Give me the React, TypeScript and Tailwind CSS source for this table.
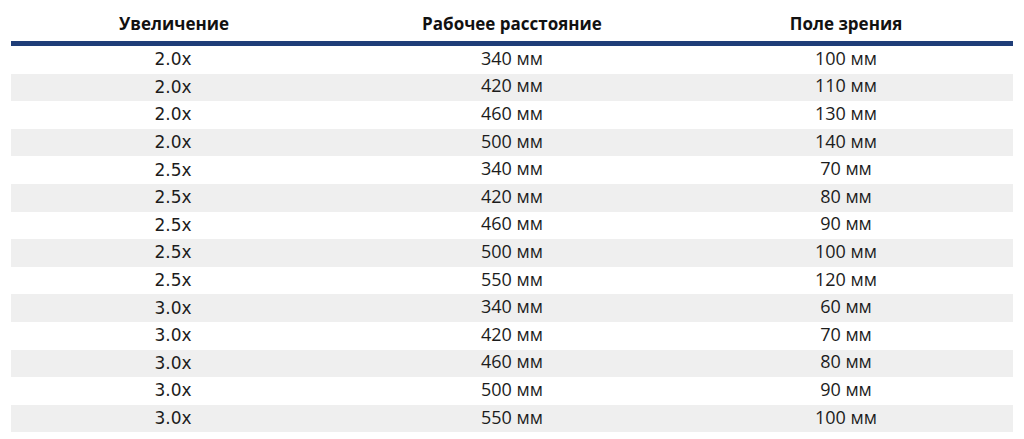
const rows: [string, string, string][] = [
  ["2.0x", "340 мм", "100 мм"],
  ["2.0x", "420 мм", "110 мм"],
  ["2.0x", "460 мм", "130 мм"],
  ["2.0x", "500 мм", "140 мм"],
  ["2.5x", "340 мм", "70 мм"],
  ["2.5x", "420 мм", "80 мм"],
  ["2.5x", "460 мм", "90 мм"],
  ["2.5x", "500 мм", "100 мм"],
  ["2.5x", "550 мм", "120 мм"],
  ["3.0x", "340 мм", "60 мм"],
  ["3.0x", "420 мм", "70 мм"],
  ["3.0x", "460 мм", "80 мм"],
  ["3.0x", "500 мм", "90 мм"],
  ["3.0x", "550 мм", "100 мм"],
];

export default function App() {
  return (
    <div className="h-[439px] w-[1024px] bg-white px-[11px] font-['Open_Sans',sans-serif]">
      <div className="grid h-[41px] grid-cols-3 items-end pb-[5px] text-[17px] font-bold text-[#111]">
        <div className="pr-[8px] text-center">Увеличение</div>
        <div className="text-center">Рабочее расстояние</div>
        <div className="text-center">Поле зрения</div>
      </div>
      <div className="h-[5px] bg-[#1f3d78]" />
      {rows.map((r, i) => (
        <div key={i}
          className={
            "grid h-[27.6px] grid-cols-3 items-center text-[18px] leading-none text-[#1c1c1c] " +
            (i % 2 === 1 ? "bg-[#efefef]" : "bg-white")
          }>
          <div className="pr-[10px] text-center font-['DejaVu_Sans',sans-serif] text-[17px]">{r[0]}</div>
          <div className="pb-[4px] text-center">{r[1]}</div>
          <div className="pb-[4px] text-center">{r[2]}</div>
        </div>
      ))}
    </div>
  );
}
